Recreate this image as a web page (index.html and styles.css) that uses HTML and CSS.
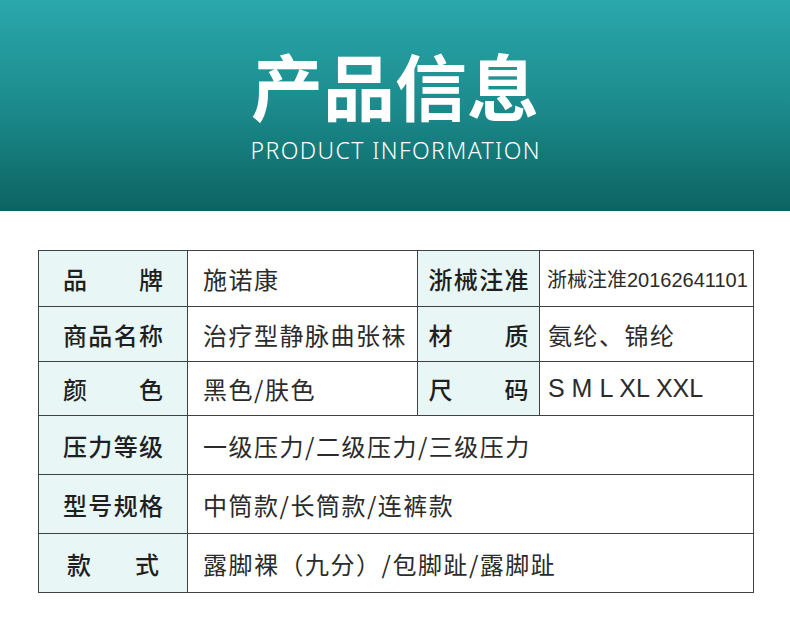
FILE: index.html
```html
<!DOCTYPE html>
<html lang="zh">
<head>
<meta charset="utf-8">
<link rel="stylesheet" href="styles.css">
</head>
<body>
<header class="banner">
  <h1 class="title">产品信息</h1>
  <p class="subtitle">PRODUCT INFORMATION</p>
</header>
<table class="spec">
  <colgroup>
    <col class="c1"><col class="c2"><col class="c3"><col class="c4">
  </colgroup>
  <tr class="r1">
    <th><span class="lbl">品牌</span></th>
    <td>施诺康</td>
    <th class="sub"><span class="lbl">浙械注准</span></th>
    <td class="small">浙械注准20162641101</td>
  </tr>
  <tr class="r2">
    <th><span class="lbl">商品名称</span></th>
    <td>治疗型静脉曲张袜</td>
    <th class="sub"><span class="lbl">材质</span></th>
    <td class="v4">氨纶、锦纶</td>
  </tr>
  <tr class="r3">
    <th><span class="lbl">颜色</span></th>
    <td>黑色/肤色</td>
    <th class="sub"><span class="lbl">尺码</span></th>
    <td class="v4 latin">S M L XL XXL</td>
  </tr>
  <tr class="r4">
    <th><span class="lbl">压力等级</span></th>
    <td colspan="3">一级压力/二级压力/三级压力</td>
  </tr>
  <tr class="r5">
    <th><span class="lbl">型号规格</span></th>
    <td colspan="3">中筒款/长筒款/连裤款</td>
  </tr>
  <tr class="r6">
    <th><span class="lbl lbl-narrow">款式</span></th>
    <td colspan="3">露脚裸（九分）/包脚趾/露脚趾</td>
  </tr>
</table>
</body>
</html>
```

FILE: styles.css
```css
html, body {
  margin: 0;
  padding: 0;
  background: #ffffff;
}
body {
  width: 790px;
  height: 630px;
  overflow: hidden;
  font-family: "Noto Sans CJK SC", "Noto Sans", sans-serif;
}
.banner {
  height: 211px;
  background: linear-gradient(180deg, #2aa8ac 0%, #1c8b8d 50%, #0d6361 100%);
  display: flex;
  flex-direction: column;
  align-items: center;
  color: #ffffff;
}
.title {
  margin: 44px 0 0;
  font-size: 72px;
  line-height: 80px;
  font-weight: 700;
  letter-spacing: 0;
}
.subtitle {
  margin: 12px 0 0;
  font-family: "Noto Sans", sans-serif;
  font-weight: 300;
  font-size: 23px;
  line-height: 28px;
  letter-spacing: 1.4px;
  margin-right: -1.4px;
}
.spec {
  margin: 39px 0 0 38px;
  width: 715px;
  border-collapse: collapse;
  table-layout: fixed;
}
.c1 { width: 149px; }
.c2 { width: 230px; }
.c3 { width: 122px; }
.c4 { width: 214px; }
.spec th, .spec td {
  border: 1px solid #3e4245;
  padding: 0;
  vertical-align: middle;
}
.spec th {
  background: #e8f6f6;
  font-weight: 500;
  font-size: 24px;
  color: #1f1f1f;
}
.spec td {
  font-size: 24px;
  color: #2b2b2b;
  padding-left: 15px;
  letter-spacing: 1.5px;
  white-space: nowrap;
  text-align: left;
}
.lbl {
  display: block;
  width: 100px;
  margin: 0 auto;
  text-align: justify;
  text-align-last: justify;
  letter-spacing: 0;
  white-space: nowrap;
}
.lbl-narrow {
  width: 92px;
}
.r1 { height: 56px; }
.r2 { height: 55px; }
.r3 { height: 54px; }
.r4 { height: 59px; }
.r5 { height: 59px; }
.r6 { height: 59px; }
.spec td.small {
  font-family: "Liberation Sans", "Noto Sans CJK SC", sans-serif;
  font-size: 20px;
  padding-left: 7px;
  letter-spacing: 0;
}
.spec td.v4 {
  padding-left: 8px;
}
.spec td.latin {
  font-family: "Liberation Sans", sans-serif;
  font-size: 25px;
  letter-spacing: 0;
}
```
